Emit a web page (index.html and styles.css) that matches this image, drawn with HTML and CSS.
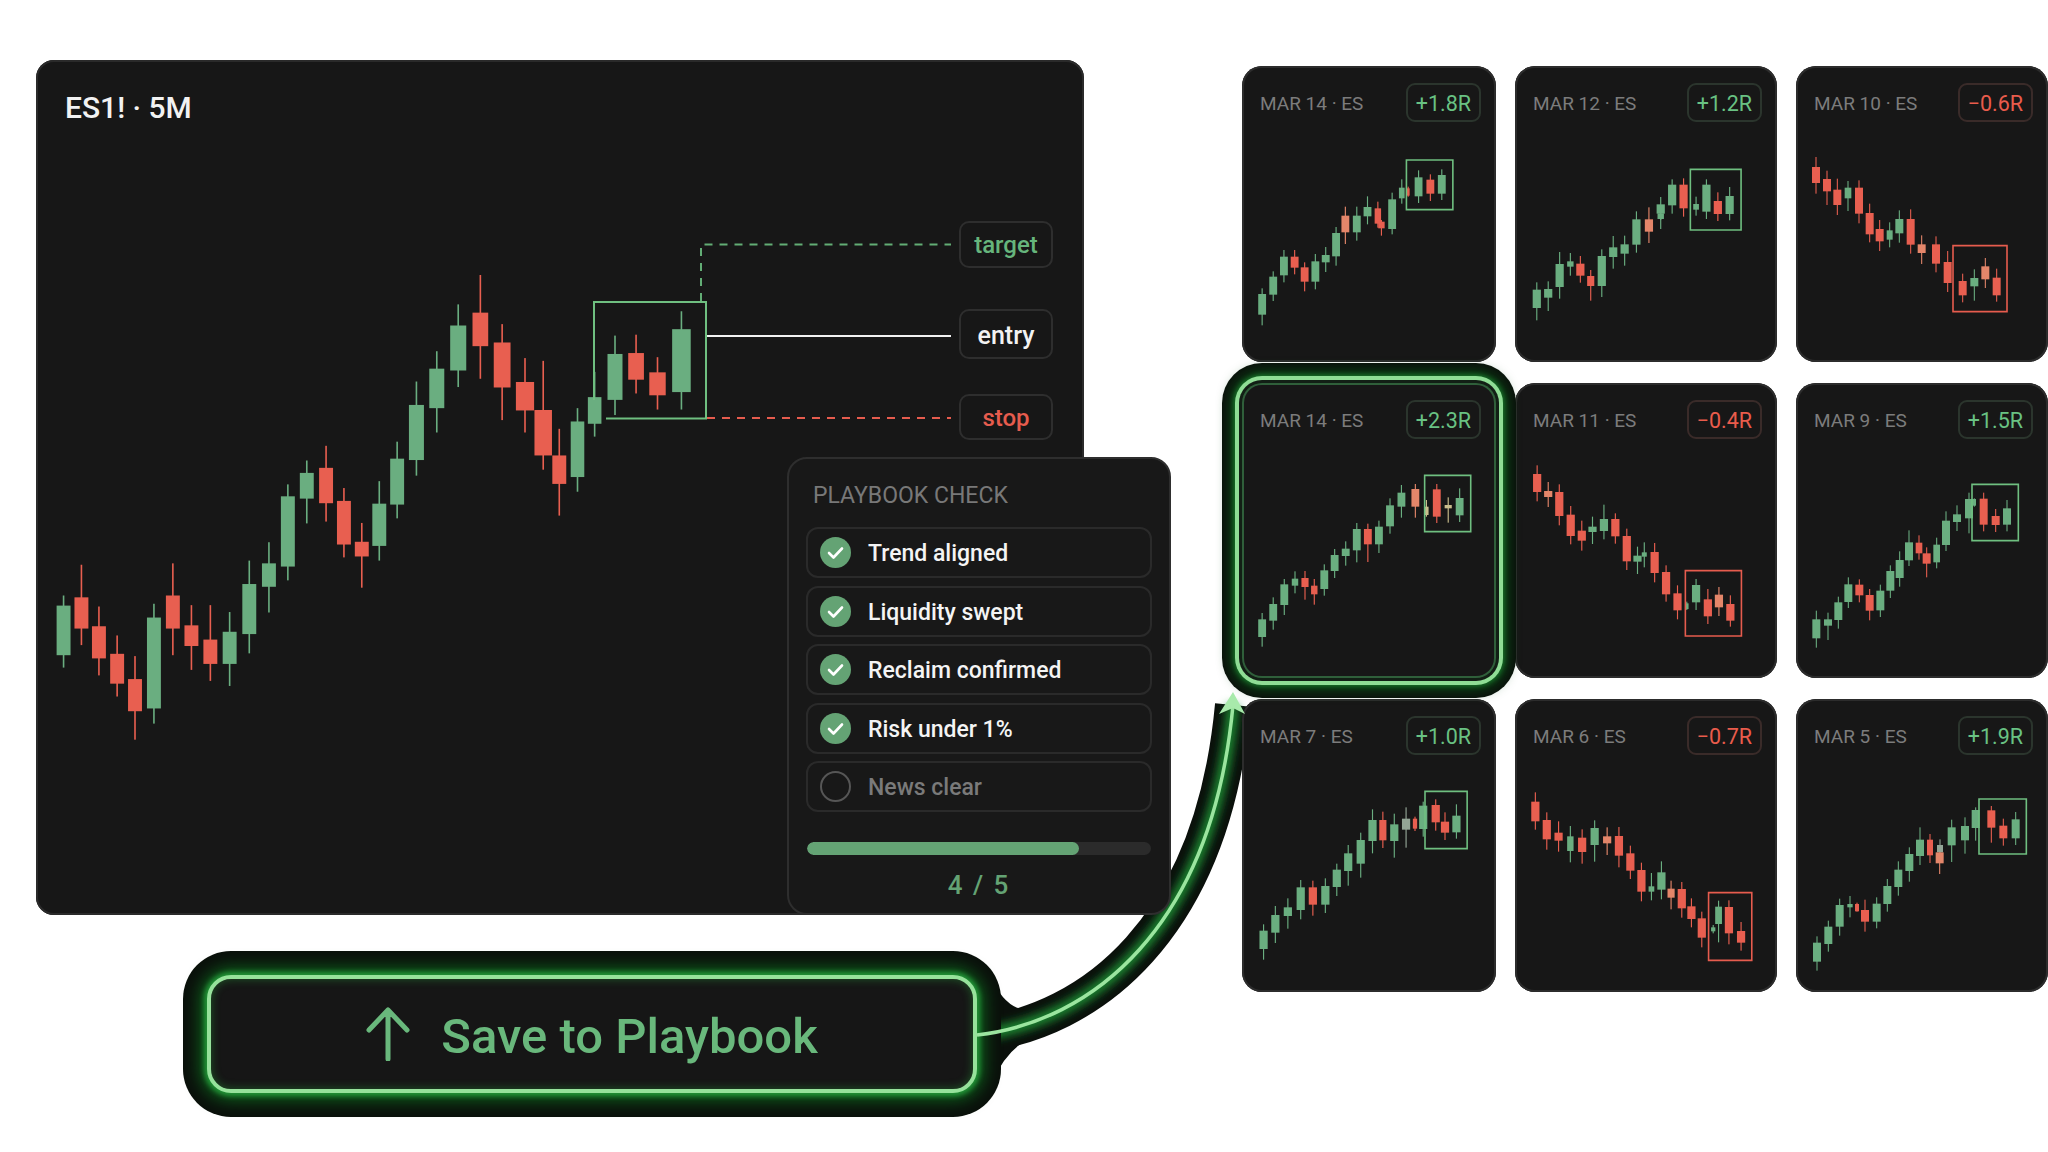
FILE: index.html
```html
<!DOCTYPE html>
<html lang="en">
<head>
    <meta charset="UTF-8">
    <title>Save to Playbook</title>
    <link rel="stylesheet" href="styles.css">
</head>
<body>
    <div class="stage">
        <svg class="connector connector-halo" viewBox="0 0 2048 1152">
            <defs>
                <filter id="blur" x="-20%" y="-20%" width="140%" height="140%">
                    <feGaussianBlur stdDeviation="5"></feGaussianBlur>
                </filter>
            </defs>
            <path class="halo-dark" d="M977 1035 C 1090 1022, 1212 930, 1233 705"></path>
            <path class="halo-neck" d="M990 975 Q 1003 1006 1024 1010 L 1024 1042 Q 1006 1052 992 1082 Z"></path>
            <path class="halo-glow" filter="url(#blur)" d="M977 1035 C 1090 1022, 1212 930, 1233 705"></path>
        </svg>

        <div class="left-col">
            <div class="chart-panel">
                <h1 class="chart-title">ES1! · 5M</h1>
                <svg class="chart-svg" data-chart="main"></svg>
                <svg class="guides" viewBox="0 0 1048 855">
                    <path class="guide-box" d="M558 340 V242 H670 V358.5 H570"></path>
                    <path class="guide-target" d="M665 241 V184.5 H915"></path>
                    <path class="guide-entry" d="M671 276 H915"></path>
                    <path class="guide-stop" d="M671 358 H915"></path>
                </svg>
                <div class="tag tag-target">target</div>
                <div class="tag tag-entry">entry</div>
                <div class="tag tag-stop">stop</div>

                <div class="checklist">
                    <div class="checklist-title">PLAYBOOK CHECK</div>
                    <div class="check-rows">
                        <div class="check-row">
                            <svg class="check-icon" viewBox="0 0 31 31"><circle class="tick-bg" cx="15.5" cy="15.5" r="15.5"></circle><path class="tick" d="M9 16 L13.5 20.5 L22 11.5"></path></svg>
                            <span>Trend aligned</span>
                        </div>
                        <div class="check-row">
                            <svg class="check-icon" viewBox="0 0 31 31"><circle class="tick-bg" cx="15.5" cy="15.5" r="15.5"></circle><path class="tick" d="M9 16 L13.5 20.5 L22 11.5"></path></svg>
                            <span>Liquidity swept</span>
                        </div>
                        <div class="check-row">
                            <svg class="check-icon" viewBox="0 0 31 31"><circle class="tick-bg" cx="15.5" cy="15.5" r="15.5"></circle><path class="tick" d="M9 16 L13.5 20.5 L22 11.5"></path></svg>
                            <span>Reclaim confirmed</span>
                        </div>
                        <div class="check-row">
                            <svg class="check-icon" viewBox="0 0 31 31"><circle class="tick-bg" cx="15.5" cy="15.5" r="15.5"></circle><path class="tick" d="M9 16 L13.5 20.5 L22 11.5"></path></svg>
                            <span>Risk under 1%</span>
                        </div>
                        <div class="check-row check-row-off">
                            <svg class="check-icon" viewBox="0 0 31 31"><circle class="tick-empty" cx="15.5" cy="15.5" r="14.5"></circle></svg>
                            <span>News clear</span>
                        </div>
                    </div>
                    <div class="progress"><div class="progress-fill"></div></div>
                    <div class="progress-count">4 / 5</div>
                </div>
            </div>

            <div class="save-button">
                <svg class="save-icon" viewBox="0 0 44 54">
                    <path d="M22 52 V3 M3 23 L22 3 L41 23"></path>
                </svg>
                <span class="save-label">Save to Playbook</span>
            </div>
        </div>

        <div class="cards">
            <div class="card">
                <div class="card-head"><span class="card-name">MAR 14 · ES</span><span class="badge badge-up">+1.8R</span></div>
                <svg class="chart-svg" data-chart="mar14a"></svg>
            </div>
            <div class="card">
                <div class="card-head"><span class="card-name">MAR 12 · ES</span><span class="badge badge-up">+1.2R</span></div>
                <svg class="chart-svg" data-chart="mar12"></svg>
            </div>
            <div class="card">
                <div class="card-head"><span class="card-name">MAR 10 · ES</span><span class="badge badge-down">−0.6R</span></div>
                <svg class="chart-svg" data-chart="mar10"></svg>
            </div>
            <div class="card card-active">
                <div class="card-head"><span class="card-name">MAR 14 · ES</span><span class="badge badge-up">+2.3R</span></div>
                <svg class="chart-svg" data-chart="mar14b"></svg>
            </div>
            <div class="card">
                <div class="card-head"><span class="card-name">MAR 11 · ES</span><span class="badge badge-down">−0.4R</span></div>
                <svg class="chart-svg" data-chart="mar11"></svg>
            </div>
            <div class="card">
                <div class="card-head"><span class="card-name">MAR 9 · ES</span><span class="badge badge-up">+1.5R</span></div>
                <svg class="chart-svg" data-chart="mar9"></svg>
            </div>
            <div class="card">
                <div class="card-head"><span class="card-name">MAR 7 · ES</span><span class="badge badge-up">+1.0R</span></div>
                <svg class="chart-svg" data-chart="mar7"></svg>
            </div>
            <div class="card">
                <div class="card-head"><span class="card-name">MAR 6 · ES</span><span class="badge badge-down">−0.7R</span></div>
                <svg class="chart-svg" data-chart="mar6"></svg>
            </div>
            <div class="card">
                <div class="card-head"><span class="card-name">MAR 5 · ES</span><span class="badge badge-up">+1.9R</span></div>
                <svg class="chart-svg" data-chart="mar5"></svg>
            </div>
        </div>

        <svg class="connector connector-line" viewBox="0 0 2048 1152">
            <path class="line-main" d="M977 1035 C 1090 1022, 1212 930, 1233 705"></path>
            <path class="line-head" d="M1233 692 L1245 714 L1233 708 L1219 714 Z"></path>
        </svg>
    </div>

    <script src="chart.js"></script>
</body>
</html>
```

FILE: styles.css
```css
* {
    box-sizing: border-box;
}
body {
    margin: 0;
    background: #ffffff;
    font-family: Roboto, "Liberation Sans", sans-serif;
    overflow: hidden;
}
.stage {
    position: relative;
    width: 2048px;
    height: 1152px;
    display: flex;
    padding: 60px 0 0 36px;
}
.connector {
    position: absolute;
    left: 0;
    top: 0;
    width: 2048px;
    height: 1152px;
    pointer-events: none;
}
.connector-halo { z-index: 0; }
.connector-line { z-index: 5; }
.halo-dark {
    fill: none;
    stroke: #0a100b;
    stroke-width: 36;
}
.halo-neck { fill: #0a100b; }
.halo-glow {
    fill: none;
    stroke: #1a8a32;
    stroke-width: 12;
}
.line-main {
    fill: none;
    stroke: #9be59f;
    stroke-width: 3.5;
}
.line-head { fill: #a8eaab; }

/* left side */
.left-col {
    width: 1048px;
    display: flex;
    flex-direction: column;
    z-index: 1;
}
.chart-panel {
    position: relative;
    height: 855px;
    background: #171717;
    border-radius: 18px;
    box-shadow: inset 0 0 0 2px #2a2a2a;
    padding: 30px 29px;
}
.chart-title {
    margin: 0;
    font-size: 30px;
    line-height: 36px;
    font-weight: 500;
    color: #f2f2f2;
}
.chart-svg {
    position: absolute;
    left: 0;
    top: 0;
    width: 100%;
    height: 100%;
}
.guides {
    position: absolute;
    left: 0;
    top: 0;
    width: 100%;
    height: 100%;
    fill: none;
}
.guide-box { stroke: #6fbf80; stroke-width: 2; }
.guide-target { stroke: #62ad75; stroke-width: 2; stroke-dasharray: 8 7; }
.guide-entry { stroke: #f2f2f2; stroke-width: 2; }
.guide-stop { stroke: #e65c4e; stroke-width: 2; stroke-dasharray: 8 7; }
.tag {
    position: absolute;
    right: 31px;
    width: 94px;
    display: flex;
    align-items: center;
    justify-content: center;
    border: 2px solid #2e2e2e;
    border-radius: 10px;
    font-size: 24px;
    font-weight: 500;
}
.tag-target { top: 161px; height: 47px; color: #66b57c; }
.tag-entry { top: 249px; height: 50px; padding-top: 2px; font-size: 25px; color: #f2f2f2; }
.tag-stop { top: 334px; height: 46px; padding-top: 2px; color: #e65c4e; }

/* checklist card */
.checklist {
    position: absolute;
    left: 751px;
    bottom: 0;
    width: 384px;
    height: 458px;
    background: #181818;
    border: 2px solid #2e2e2e;
    border-radius: 20px;
    padding: 21px 17px 0;
}
.checklist-title {
    margin-left: 7px;
    font-size: 23px;
    line-height: 32px;
    color: #787878;
}
.check-rows {
    display: flex;
    flex-direction: column;
    gap: 7.6px;
    margin-top: 15px;
}
.check-row {
    height: 51px;
    display: flex;
    align-items: center;
    gap: 17px;
    padding-left: 12px;
    border: 2px solid #2a2a2a;
    border-radius: 12px;
    font-size: 23px;
    font-weight: 500;
    color: #f4f4f4;
}
.check-row span {
    padding-top: 2px;
}
.check-row-off { color: #7a7a7a; }
.check-icon {
    width: 31px;
    height: 31px;
    flex: none;
}
.tick-bg { fill: #64a374; }
.tick {
    fill: none;
    stroke: #ffffff;
    stroke-width: 2.6;
    stroke-linecap: round;
    stroke-linejoin: round;
}
.tick-empty {
    fill: none;
    stroke: #565656;
    stroke-width: 2;
}
.progress {
    height: 13px;
    margin: 30px 1px 0;
    background: #2b2b2b;
    border-radius: 7px;
    overflow: hidden;
}
.progress-fill {
    width: 79%;
    height: 100%;
    background: #64a374;
    border-radius: 7px;
}
.progress-count {
    margin-top: 14px;
    text-align: center;
    font-size: 26px;
    line-height: 32px;
    font-weight: 500;
    letter-spacing: 2px;
    color: #64a374;
}

/* save button */
.save-button {
    width: 770px;
    height: 118px;
    margin: 60px 0 0 171px;
    display: flex;
    align-items: center;
    justify-content: center;
    gap: 31px;
    background: #161616;
    border: 4px solid #96e29b;
    border-radius: 24px;
    box-shadow: inset 0 0 10px rgba(40, 170, 60, .45), 0 0 5px 3px #239638, 0 0 16px 8px #0f5a1c, 0 0 0 24px #0a100b;
    color: #69b87c;
    font-size: 49px;
    font-weight: 500;
}
.save-label {
    padding-top: 5px;
}
.save-icon {
    width: 44px;
    height: 54px;
    flex: none;
    fill: none;
    stroke: #69b87c;
    stroke-width: 5;
    stroke-linecap: round;
    stroke-linejoin: round;
}

/* trade cards */
.cards {
    position: absolute;
    left: 1242px;
    top: 66px;
    display: grid;
    grid-template-columns: 254px 262px 252px;
    grid-template-rows: 296px 295px 293px;
    column-gap: 19px;
    row-gap: 21px;
    z-index: 1;
}
.card {
    position: relative;
    background: #171717;
    border-radius: 20px;
    box-shadow: inset 0 0 0 2px #2c2c2c;
}
.card-active {
    z-index: 2;
    box-shadow: inset 0 0 0 2px #2f5f3a, 0 0 0 3px #121f15, 0 0 0 7px #8fdd95, 0 0 5px 8px #1a7a2c, 0 0 14px 11px #0e4f1a, 0 0 0 20px #0a100b;
}
.card-head {
    display: flex;
    align-items: center;
    justify-content: space-between;
    padding: 17px 15px 0 18px;
}
.card-name {
    font-size: 19px;
    padding-top: 1px;
    color: #7c7c7c;
}
.badge {
    height: 39px;
    display: flex;
    align-items: center;
    padding: 1px 8px 0;
    border: 2px solid #2b352d;
    border-radius: 9px;
    font-size: 21.5px;
}
.badge-up { color: #69c283; }
.badge-down { color: #e95c4c; border-color: #3a2b29; }
```

FILE: chart.js
```javascript
// candle = [type, centre x, body top, body bottom, wick top, wick bottom, body width]
// coordinates are in each chart's own viewBox, width is optional
const CHARTS = {
    main: {
        view: '44.8 21.8 2934.4 1862', width: 39, wick: 4.5,
        candles: [
            ['g', 122, 1210, 1318, 1188, 1345], ['r', 172, 1192, 1260, 1121, 1296], ['r', 221, 1255, 1325, 1212, 1362],
            ['r', 272, 1315, 1380, 1275, 1408], ['r', 322, 1370, 1440, 1320, 1502], ['g', 375, 1236, 1434, 1206, 1467],
            ['r', 428, 1188, 1260, 1118, 1318], ['r', 480, 1253, 1298, 1209, 1350], ['r', 533, 1284, 1337, 1209, 1374],
            ['g', 587, 1267, 1337, 1224, 1385], ['g', 642, 1163, 1272, 1112, 1314], ['g', 697, 1118, 1169, 1072, 1225],
            ['g', 750, 972, 1125, 946, 1155], ['g', 803, 921, 977, 894, 1031], ['r', 857, 910, 987, 862, 1027],
            ['r', 907, 982, 1077, 954, 1105], ['r', 957, 1071, 1103, 1030, 1171], ['g', 1006, 988, 1080, 939, 1112],
            ['g', 1056, 890, 990, 853, 1020], ['g', 1110, 773, 893, 722, 927, 42], ['g', 1167, 694, 780, 656, 833, 42],
            ['g', 1227, 600, 698, 554, 734, 45], ['r', 1289, 572, 645, 490, 716, 44], ['r', 1350, 637, 735, 597, 806, 47],
            ['r', 1414, 723, 785, 671, 833, 51], ['r', 1465, 784, 883, 677, 914, 49], ['r', 1510, 883, 945, 825, 1014],
            ['g', 1561, 809, 930, 780, 962, 38], ['g', 1609, 756, 814, 701, 842, 38], ['g', 1666, 662, 762, 622, 795, 42],
            ['r', 1725, 660, 718, 620, 748, 44], ['r', 1785, 702, 752, 669, 783, 46], ['g', 1852, 608, 745, 569, 783, 52]
        ]
    },
    mar14a: {
        view: '61.6 48 711.2 888', width: 22, wick: 3.2, box: ['g', 522, 330, 130, 149],
        candles: [
            ['g', 118, 732, 794, 715, 826], ['g', 149, 680, 734, 664, 753], ['g', 179, 620, 676, 600, 697],
            ['r', 209, 620, 653, 600, 673], ['r', 237, 652, 695, 637, 724], ['g', 267, 634, 695, 612, 718],
            ['g', 296, 615, 637, 591, 666], ['g', 325, 549, 619, 531, 647], ['o', 351, 497, 547, 470, 582],
            ['g', 383, 497, 547, 470, 572], ['g', 413, 471, 499, 439, 523], ['r', 442, 475, 521, 455, 533, 18],
            ['r', 452, 515, 535, 510, 557, 18], ['g', 482, 448, 537, 428, 553], ['g', 509, 413, 445, 388, 461, 16],
            ['r', 527, 415, 437, 410, 440, 8], ['g', 556, 382, 439, 361, 459], ['r', 589, 389, 431, 373, 453],
            ['g', 621, 375, 431, 358, 450]
        ]
    },
    mar12: {
        view: '826 48 733.6 888', width: 23, wick: 3.2, box: ['g', 1317, 358, 142, 182],
        candles: [
            ['g', 887, 719, 774, 697, 811], ['g', 919, 717, 743, 694, 783], ['g', 951, 642, 711, 606, 746],
            ['g', 981, 634, 650, 609, 677, 18], ['r', 1009, 641, 677, 618, 698], ['r', 1038, 678, 708, 660, 752, 20],
            ['g', 1069, 618, 708, 598, 741], ['g', 1101, 592, 621, 558, 656], ['g', 1133, 583, 611, 557, 647],
            ['g', 1166, 508, 584, 484, 608], ['o', 1201, 508, 545, 472, 579], ['g', 1234, 463, 491, 441, 537],
            ['g', 1234, 490, 507, 490, 510, 18], ['g', 1266, 404, 466, 388, 491], ['r', 1298, 404, 475, 385, 500],
            ['g', 1333, 462, 479, 440, 497, 16], ['g', 1362, 404, 485, 388, 507], ['r', 1394, 453, 492, 427, 513],
            ['g', 1427, 438, 492, 411, 511]
        ]
    },
    mar10: {
        view: '288 48 756 888', width: 24, wick: 3.2, box: ['r', 759, 587, 162, 198],
        candles: [
            ['r', 348, 351, 399, 321, 431], ['r', 381, 387, 424, 362, 465], ['r', 412, 419, 465, 386, 495],
            ['g', 444, 413, 445, 393, 483, 20], ['r', 477, 413, 491, 391, 520], ['r', 509, 489, 553, 461, 577],
            ['r', 539, 537, 574, 510, 603], ['g', 569, 541, 569, 517, 592, 18], ['g', 598, 507, 550, 481, 578],
            ['r', 632, 507, 584, 478, 611], ['o', 665, 583, 609, 556, 642], ['r', 708, 583, 641, 559, 667],
            ['r', 743, 636, 699, 603, 726], ['r', 788, 693, 736, 671, 757], ['g', 823, 684, 709, 658, 752],
            ['o', 856, 649, 688, 624, 714], ['r', 890, 683, 736, 656, 755]
        ]
    },
    mar14b: {
        view: '89.6 69 711.2 885', width: 22, wick: 3.2, box: ['g', 601, 346, 129, 169],
        candles: [
            ['g', 146, 778, 831, 759, 860], ['g', 177, 732, 782, 712, 809], ['g', 208, 673, 735, 657, 765],
            ['g', 238, 656, 677, 634, 700, 18], ['r', 266, 654, 681, 633, 719, 20], ['r', 292, 677, 703, 657, 734, 18],
            ['g', 320, 631, 687, 613, 707], ['g', 349, 585, 633, 567, 654], ['g', 380, 566, 588, 544, 617],
            ['g', 411, 507, 571, 489, 607], ['r', 442, 507, 553, 491, 606], ['g', 473, 500, 553, 482, 579],
            ['g', 504, 436, 499, 415, 521], ['g', 536, 398, 440, 375, 473], ['o', 575, 387, 440, 372, 473],
            ['t', 606, 440, 465, 420, 470, 12], ['r', 635, 388, 470, 372, 489], ['t', 667, 435, 445, 412, 488, 20],
            ['g', 699, 414, 466, 385, 486]
        ]
    },
    mar11: {
        view: '854 69 733.6 885', width: 23, wick: 3.2, box: ['r', 1331, 632, 157, 196],
        candles: [
            ['r', 916, 342, 396, 316, 424], ['o', 947, 393, 411, 366, 441], ['r', 978, 396, 468, 373, 496],
            ['r', 1010, 464, 528, 438, 553], ['r', 1041, 512, 542, 482, 572], ['g', 1071, 500, 516, 470, 552],
            ['g', 1103, 477, 513, 434, 538], ['r', 1135, 477, 529, 460, 551], ['r', 1167, 528, 604, 506, 630],
            ['g', 1197, 587, 605, 560, 642], ['g', 1216, 577, 590, 547, 622, 14], ['r', 1245, 576, 639, 549, 667],
            ['r', 1277, 636, 703, 616, 725], ['r', 1309, 700, 751, 676, 778], ['g', 1335, 730, 747, 725, 750, 10],
            ['g', 1361, 675, 727, 657, 750], ['r', 1394, 718, 769, 687, 792], ['o', 1425, 704, 742, 681, 768],
            ['r', 1457, 732, 782, 706, 800]
        ]
    },
    mar9: {
        view: '288 39 756 885', width: 24, wick: 3.2, box: ['g', 816, 343, 139, 169],
        candles: [
            ['g', 349, 748, 805, 722, 833], ['g', 384, 748, 767, 728, 810], ['g', 415, 697, 750, 680, 776],
            ['g', 445, 643, 696, 622, 714], ['r', 478, 644, 676, 628, 697], ['r', 509, 675, 722, 657, 751],
            ['g', 541, 662, 721, 644, 741], ['g', 571, 603, 662, 586, 684], ['g', 599, 570, 624, 544, 650],
            ['g', 627, 517, 571, 481, 588], ['r', 657, 518, 550, 496, 569, 20], ['r', 680, 550, 581, 532, 622],
            ['g', 710, 524, 577, 503, 595, 20], ['g', 738, 452, 525, 424, 543], ['g', 771, 433, 456, 406, 483],
            ['g', 807, 387, 445, 368, 490], ['g', 823, 387, 407, 385, 410, 10], ['r', 851, 386, 464, 368, 484],
            ['r', 887, 438, 465, 417, 486], ['g', 921, 415, 464, 390, 484]
        ]
    },
    mar7: {
        view: '61.6 27 711.2 879', width: 23, wick: 3.2, box: ['g', 574, 304, 118, 172],
        candles: [
            ['g', 122, 722, 777, 703, 809], ['g', 155, 675, 728, 648, 759], ['g', 190, 652, 678, 625, 716],
            ['g', 226, 592, 660, 570, 688], ['r', 260, 592, 644, 572, 677], ['g', 295, 588, 644, 565, 669],
            ['g', 327, 539, 591, 521, 618], ['g', 359, 490, 543, 465, 587], ['g', 394, 450, 521, 428, 563],
            ['g', 427, 390, 453, 358, 490], ['r', 456, 390, 451, 365, 474, 20], ['g', 488, 403, 453, 371, 503],
            ['s', 521, 386, 419, 352, 473], ['r', 546, 386, 416, 380, 423, 12], ['g', 569, 347, 417, 335, 440],
            ['r', 604, 345, 397, 328, 422], ['r', 630, 395, 428, 367, 450], ['g', 662, 377, 427, 343, 446]
        ]
    },
    mar6: {
        view: '826 27 733.6 879', width: 23, wick: 3.2, box: ['r', 1368, 608, 121, 203],
        candles: [
            ['r', 883, 335, 394, 307, 419], ['r', 915, 390, 448, 367, 479], ['r', 948, 428, 452, 394, 485],
            ['g', 981, 439, 483, 408, 517, 18], ['r', 1014, 443, 486, 418, 521], ['g', 1049, 414, 465, 391, 515],
            ['o', 1084, 439, 460, 412, 495], ['r', 1117, 438, 497, 411, 532], ['r', 1149, 490, 542, 467, 567],
            ['r', 1180, 540, 605, 518, 634], ['g', 1208, 589, 605, 549, 631, 16], ['g', 1236, 547, 599, 514, 628],
            ['o', 1263, 596, 623, 572, 658, 20], ['r', 1293, 597, 655, 576, 683], ['r', 1320, 649, 687, 625, 712],
            ['r', 1349, 685, 743, 665, 772], ['g', 1381, 712, 724, 705, 730, 12], ['g', 1396, 650, 702, 632, 757, 19],
            ['r', 1425, 651, 730, 631, 763], ['r', 1459, 723, 758, 696, 782]
        ]
    },
    mar5: {
        view: '288 27 756 879', width: 24, wick: 3.2, box: ['g', 837, 327, 142, 165],
        candles: [
            ['g', 351, 758, 815, 739, 842], ['g', 385, 710, 762, 692, 785], ['g', 419, 645, 710, 626, 737],
            ['g', 450, 642, 652, 618, 682, 16], ['r', 471, 642, 664, 638, 665, 12], ['r', 495, 660, 695, 629, 725],
            ['g', 530, 641, 695, 622, 715], ['g', 562, 588, 642, 567, 665], ['g', 595, 539, 591, 514, 617],
            ['g', 628, 492, 543, 472, 575], ['g', 660, 449, 498, 412, 525], ['r', 690, 449, 496, 432, 519, 18],
            ['s', 720, 465, 487, 448, 490, 18], ['o', 719, 487, 520, 487, 552], ['g', 755, 412, 466, 389, 516],
            ['g', 795, 408, 451, 382, 491], ['g', 827, 360, 414, 352, 452], ['r', 874, 361, 413, 348, 458],
            ['r', 910, 407, 445, 386, 467], ['g', 947, 388, 445, 366, 465]
        ]
    }
};

const COLORS = {
    g: '#6aae80',
    r: '#e85f50',
    o: '#e4866a',
    t: '#c9bd8c',
    s: '#93a596'
};
const SVG_NS = 'http://www.w3.org/2000/svg';

function addRect(svg, x, y, w, h, fill) {
    const rect = document.createElementNS(SVG_NS, 'rect');
    rect.setAttribute('x', x);
    rect.setAttribute('y', y);
    rect.setAttribute('width', w);
    rect.setAttribute('height', h);
    rect.setAttribute('fill', fill);
    svg.appendChild(rect);
    return rect;
}

document.querySelectorAll('svg[data-chart]').forEach((svg) => {
    const chart = CHARTS[svg.dataset.chart];
    svg.setAttribute('viewBox', chart.view);
    svg.setAttribute('preserveAspectRatio', 'none');

    chart.candles.forEach(([type, cx, top, bottom, wickTop, wickBottom, width]) => {
        const w = width || chart.width;
        addRect(svg, cx - chart.wick / 2, wickTop, chart.wick, wickBottom - wickTop, COLORS[type]);
        addRect(svg, cx - w / 2, top, w, bottom - top, COLORS[type]);
    });

    if (chart.box) {
        const [type, x, y, w, h] = chart.box;
        const box = addRect(svg, x, y, w, h, 'none');
        box.setAttribute('stroke', type === 'g' ? '#6fbf80' : '#e65c4e');
        box.setAttribute('stroke-width', '1.6');
        box.setAttribute('vector-effect', 'non-scaling-stroke');
    }
});
```
